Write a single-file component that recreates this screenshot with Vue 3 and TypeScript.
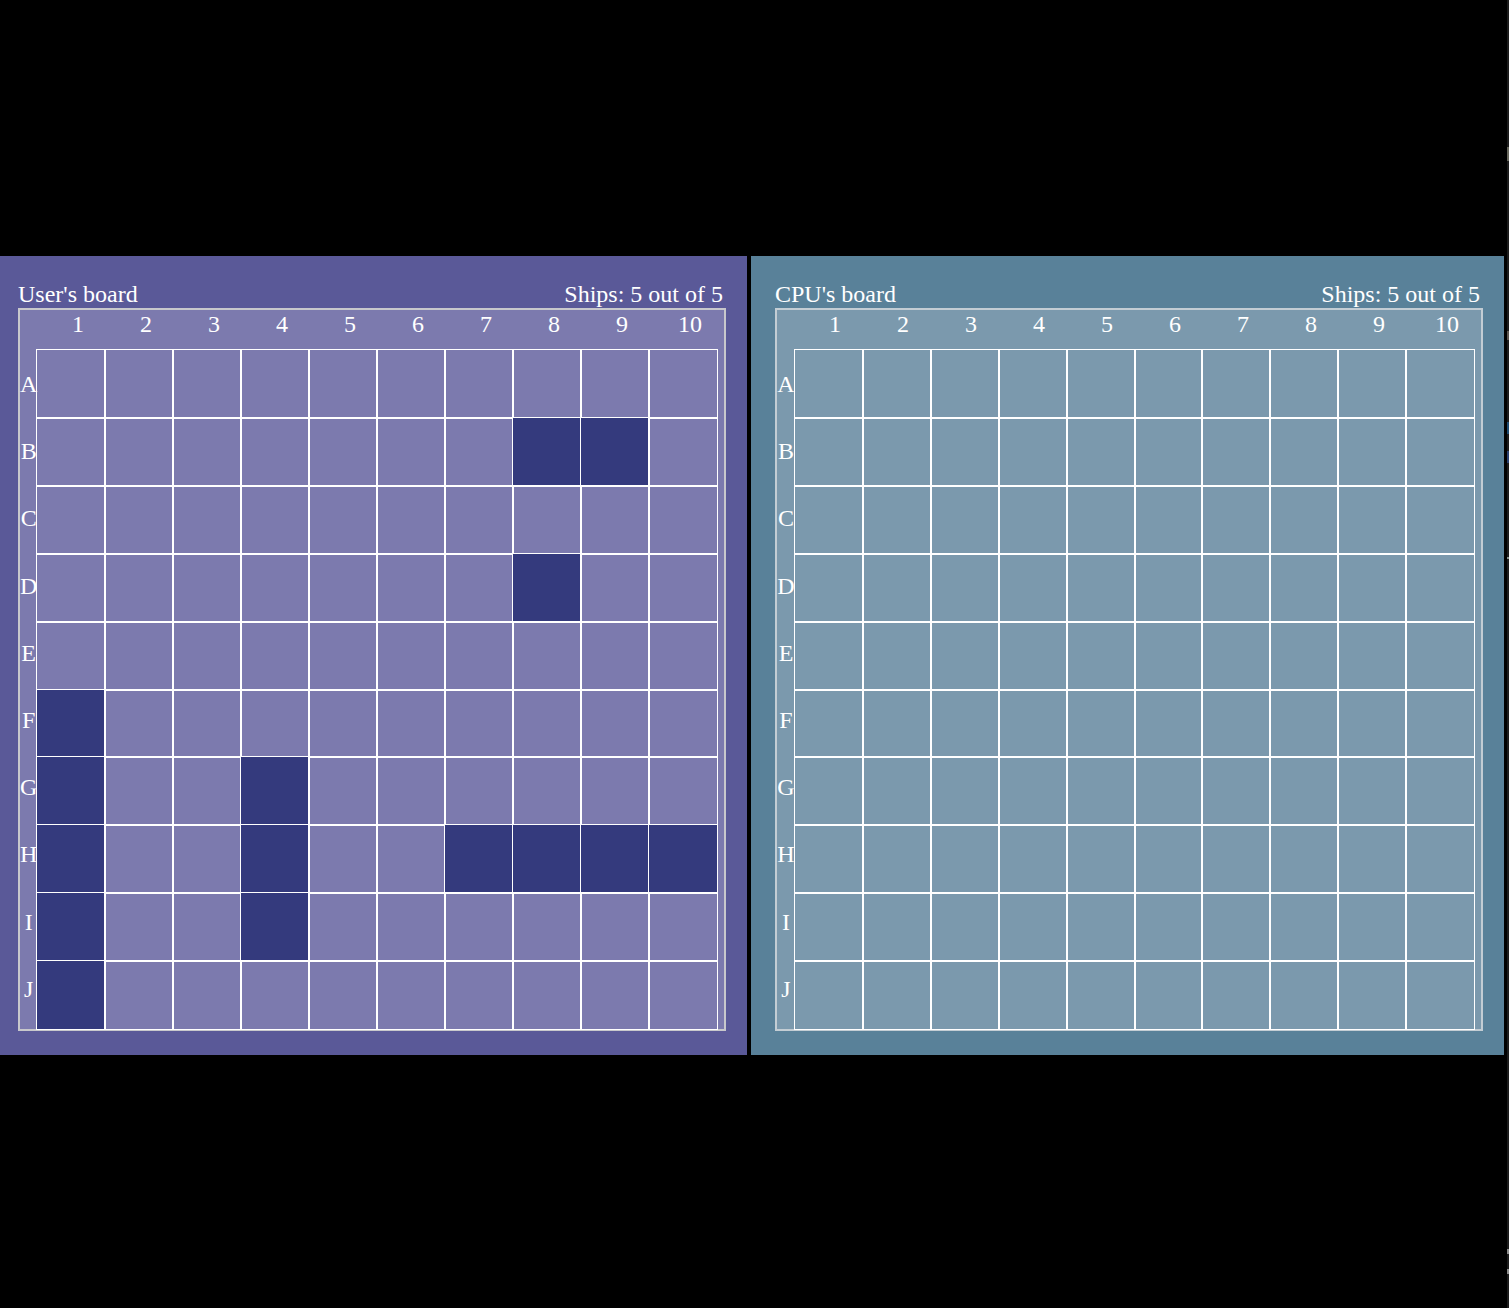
<script setup lang="ts">
interface Board {
  id: string
  title: string
  ships: string[]
}

const columns = [1, 2, 3, 4, 5, 6, 7, 8, 9, 10]
const rows = ['A', 'B', 'C', 'D', 'E', 'F', 'G', 'H', 'I', 'J']

const boards: Board[] = [
  {
    id: 'user',
    title: "User's board",
    ships: [
      'B8', 'B9',
      'D8',
      'F1', 'G1', 'H1', 'I1', 'J1',
      'G4', 'H4', 'I4',
      'H7', 'H8', 'H9', 'H10',
    ],
  },
  { id: 'cpu', title: "CPU's board", ships: [] },
]

// Heights along the window's edge of the small marks, with their colours
const marks = [
  { top: 147, height: 14, color: '#66665c' },
  { top: 331, height: 9, color: '#5c5650' },
  { top: 422, height: 12, color: '#1d4a70' },
  { top: 451, height: 12, color: '#2a4070' },
  { top: 557, height: 2, color: '#8a9490' },
  { top: 1249, height: 5, color: '#8c8c8c' },
  { top: 1269, height: 5, color: '#8c8c8c' },
]
</script>

<template>
  <div class="game">
    <main class="boards">
      <section v-for="board in boards" :key="board.id" class="panel" :class="board.id">
        <header class="heading">
          <span>{{ board.title }}</span>
          <span>Ships: 5 out of 5</span>
        </header>
        <div class="board">
          <div class="numbers">
            <span v-for="column in columns" :key="column">{{ column }}</span>
          </div>
          <div class="field">
            <div class="letters">
              <span v-for="row in rows" :key="row">{{ row }}</span>
            </div>
            <div class="cells">
              <template v-for="row in rows" :key="row">
                <div
                  v-for="column in columns"
                  :key="column"
                  class="cell"
                  :class="{ ship: board.ships.includes(row + column) }"
                ></div>
              </template>
            </div>
          </div>
        </div>
      </section>
    </main>
    <div class="edge" aria-hidden="true">
      <i
        v-for="mark in marks"
        :key="mark.top"
        class="mark"
        :style="{ top: mark.top + 'px', height: mark.height + 'px', background: mark.color }"
      ></i>
    </div>
  </div>
</template>

<style>
html,
body {
  margin: 0;
  background: #000;
}
</style>

<style scoped>
.game {
  display: flex;
  min-height: 100vh;
  overflow: hidden;
  background: #000;
  color: #fff;
  font-family: 'Liberation Serif', 'Times New Roman', serif;
  font-size: 24px;
  line-height: 27px;
}

.boards {
  flex: 1;
  display: grid;
  grid-template-columns: 1fr 1fr;
  align-content: center;
  gap: 4px;
  margin-left: -6px;
  padding-top: 3px;
}

.panel {
  padding: 25px 21px 24px 24px;
}

.user {
  --label: 17px;
  background: #5a5998;
}

.cpu {
  --label: 18px;
  background: #598199;
}

.heading {
  display: flex;
  justify-content: space-between;
  padding-right: 3px;
}

.board {
  border: 2px solid #c8c8cc;
}

.user .board {
  background: #7c7aae;
}

.cpu .board {
  background: #7b99ad;
  border-color: #c3cdd4;
}

.numbers {
  display: grid;
  grid-template-columns: repeat(10, 1fr);
  box-sizing: border-box;
  height: 40px;
  margin-left: 24px;
  padding-top: 1px;
  text-align: center;
}

.field {
  display: grid;
  grid-template-columns: var(--label) 1fr;
  padding-right: 7px;
}

.letters {
  display: grid;
  grid-template-rows: repeat(10, 1fr);
  align-items: center;
  justify-items: center;
  padding: 1px 0 6px;
}

.cells {
  display: grid;
  grid-template-columns: repeat(10, 1fr);
  grid-template-rows: repeat(10, 1fr);
  height: 679px;
}

/* Outlines lie over the neighbouring cells; a later ship covers the earlier ones */
.cell {
  position: relative;
  z-index: 0;
  outline: 1px solid #fff;
}

.ship {
  background: #343a7d;
}

.edge {
  position: relative;
  width: 2px;
  margin-left: 3px;
  background: #1c1c1c;
}

.mark {
  position: absolute;
  left: 0;
  width: 2px;
}
</style>
